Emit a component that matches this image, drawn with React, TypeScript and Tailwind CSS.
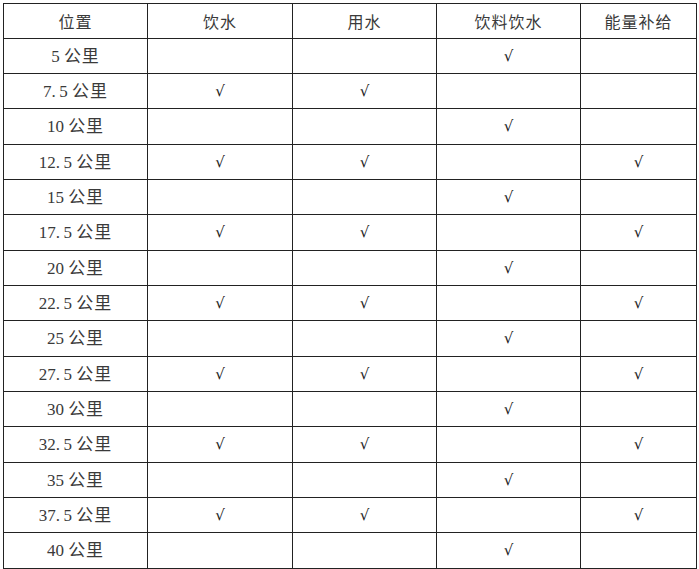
const headers = ["位置", "饮水", "用水", "饮料饮水", "能量补给"];

const colClasses = ["w-[144px]", "w-[145px]", "w-[144px]", "w-[144px]", "w-[116px]"];

const rows = [
  { km: "5", h: "h-[35px]" },
  { km: "7.5", h: "h-[35px]" },
  { km: "10", h: "h-[36px]" },
  { km: "12.5", h: "h-[35px]" },
  { km: "15", h: "h-[35px]" },
  { km: "17.5", h: "h-[36px]" },
  { km: "20", h: "h-[35px]" },
  { km: "22.5", h: "h-[35px]" },
  { km: "25", h: "h-[36px]" },
  { km: "27.5", h: "h-[35px]" },
  { km: "30", h: "h-[35px]" },
  { km: "32.5", h: "h-[36px]" },
  { km: "35", h: "h-[35px]" },
  { km: "37.5", h: "h-[35px]" },
  { km: "40", h: "h-[36px]" },
];

function marks(km: string) {
  const half = km.includes(".");
  if (!half) return [false, false, true, false];
  return [true, true, false, km !== "7.5"];
}

function Cell({ w, h, children }: { w: string; h: string; children?: React.ReactNode }) {
  return (
    <div className={`${w} ${h} shrink-0 border-r border-b border-[#222] flex items-center justify-center`}>
      {children}
    </div>
  );
}

export default function App() {
  return (
    <div className="w-[699px] h-[569px] bg-white pt-[3px] pl-[3px] text-[#333]">
      <div className="inline-flex flex-col border-l border-t border-[#222]">
        <div className="flex">
          {headers.map((t, i) => (
            <Cell key={t} w={colClasses[i]} h="h-[35px]">
              <span className="font-['Noto_Sans_CJK_SC',sans-serif] text-[16px] leading-none tracking-[1px] text-[#3a3a3a]">{t}</span>
            </Cell>
          ))}
        </div>
        {rows.map((r) => (
          <div className="flex" key={r.km}>
            <Cell w={colClasses[0]} h={r.h}>
              <span className="flex items-baseline leading-none text-[#3a3a3a] mb-[2px]">
                <span className="font-['Liberation_Serif',serif] text-[17px] whitespace-pre">
                  {r.km.replace(".", ".\u2009") + " "}
                </span>
                <span className="font-['Noto_Sans_CJK_SC',sans-serif] text-[17px] tracking-[1px]">公里</span>
              </span>
            </Cell>
            {marks(r.km).map((m, i) => (
              <Cell key={i} w={colClasses[i + 1]} h={r.h}>
                {m && <span className="text-[15px] leading-none text-[#222] font-['DejaVu_Sans',sans-serif]">√</span>}
              </Cell>
            ))}
          </div>
        ))}
      </div>
    </div>
  );
}
